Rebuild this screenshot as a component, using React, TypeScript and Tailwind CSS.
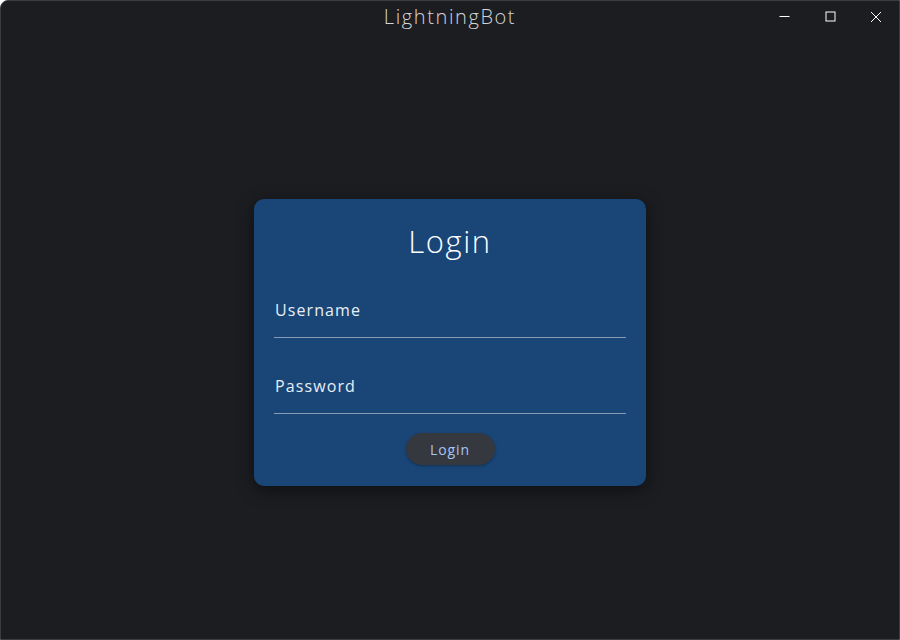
import React from "react";

export default function App() {
  return (
    <div
      className="w-[900px] h-[640px] bg-[#1c1d21] border border-[#3b3c40] rounded-tl-[8px] flex flex-col overflow-hidden"
      style={{ fontFamily: '"Open Sans", "Liberation Sans", sans-serif' }}
    >
      <div className="h-[31px] flex items-center relative shrink-0">
        <div className="flex-1 text-center text-[20px] font-light text-[#d4d4d6] tracking-[1.6px] leading-none pt-[1px]">
          LightningBot
        </div>
        <div className="absolute right-0 top-0 h-[31px] flex items-center">
          <div className="w-[46px] h-[31px] flex items-center justify-center">
            <svg width="11" height="11" viewBox="0 0 11 11">
              <path d="M0.5 5.5h10" stroke="#ffffff" strokeWidth="1" />
            </svg>
          </div>
          <div className="w-[46px] h-[31px] flex items-center justify-center">
            <svg width="11" height="11" viewBox="0 0 11 11">
              <rect x="1" y="1" width="9" height="9" fill="none" stroke="#ffffff" strokeWidth="1" />
            </svg>
          </div>
          <div className="w-[46px] h-[31px] flex items-center justify-center">
            <svg width="12" height="12" viewBox="0 0 12 12">
              <path d="M1 1L11 11M11 1L1 11" stroke="#ffffff" strokeWidth="1" />
            </svg>
          </div>
        </div>
      </div>
      <div className="flex-1 flex items-center justify-center pt-[14px]">
        <div className="w-[392px] h-[287px] bg-[#194677] rounded-[10px] shadow-[0_4px_16px_rgba(0,0,0,0.5)] flex flex-col px-[20px] pt-[22px]">
          <div className="text-center text-[31px] font-light text-white leading-[40px] tracking-[1.6px]">Login</div>
          <div className="mt-[38px] text-[16px] text-[#e8eef6] leading-[22px] pl-[1px] tracking-[1.1px]">Username</div>
          <div className="mt-[16px] h-[1px] bg-[#8a9cb5]" />
          <div className="mt-[37px] text-[16px] text-[#e8eef6] leading-[22px] pl-[1px] tracking-[1.1px]">Password</div>
          <div className="mt-[16px] h-[1px] bg-[#8a9cb5]" />
          <div className="mt-[19px] flex justify-center">
            <div className="w-[89px] h-[32px] rounded-full bg-[#35383f] text-[#a9c3f2] text-[14px] flex items-center justify-center shadow-[0_1px_3px_rgba(0,0,0,0.3)] tracking-[0.9px]">
              Login
            </div>
          </div>
        </div>
      </div>
    </div>
  );
}
